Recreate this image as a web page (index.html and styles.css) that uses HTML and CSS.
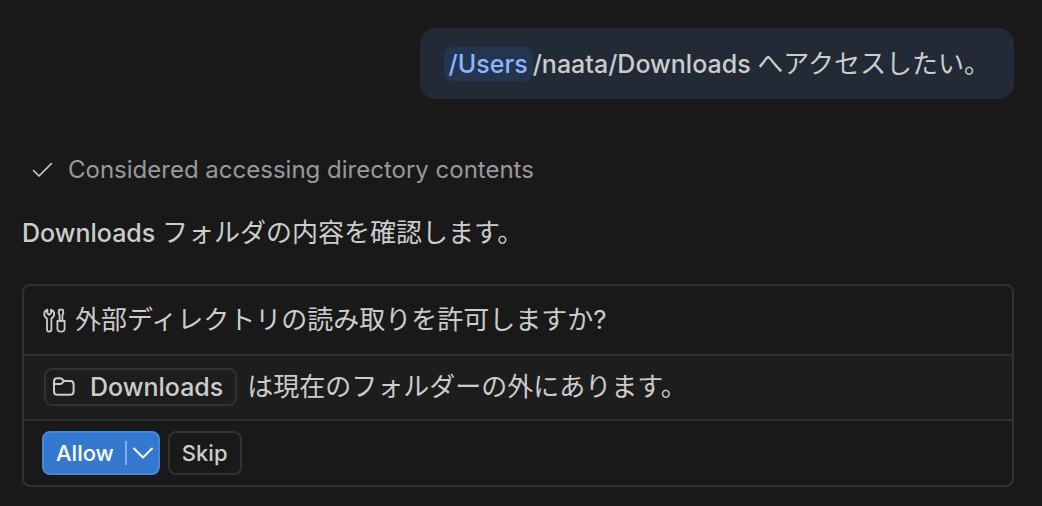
FILE: index.html
```html
<!DOCTYPE html>
<html lang="ja">
<head>
  <meta charset="UTF-8">
  <meta name="viewport" content="width=device-width, initial-scale=1.0">
  <title>Chat</title>
  <link rel="stylesheet" href="styles.css">
</head>
<body>

<main class="chat">
  <div class="request"><span class="command">/Users</span>/naata/Downloads <span class="ja">へアクセスしたい。</span></div>

  <div class="progress">
    <svg class="check-icon" width="22" height="22" viewBox="0 0 22 22" fill="none" stroke="currentColor" stroke-width="1.6" stroke-linecap="round" stroke-linejoin="round">
      <path d="M2.5 11.5L8 17L20.5 4.5"/>
    </svg>
    <span>Considered accessing directory contents</span>
  </div>

  <p class="response">Downloads <span class="ja">フォルダの内容を確認します。</span></p>

  <section class="confirm">
    <div class="confirm-title">
      <svg width="24" height="26" viewBox="0 0 24 26" fill="none" stroke="currentColor" stroke-width="1.8" stroke-linecap="round" stroke-linejoin="round">
        <path d="M4.4 2.6C2.4 3.4 1.2 5 1.2 7C1.2 9.1 2.4 10.7 4 11.6V22.2C4 23.7 5 24.6 6.2 24.6S8.4 23.7 8.4 22.2V11.6C10 10.7 11.2 9.1 11.2 7C11.2 5 10 3.4 8 2.6V6.4L6.2 7.8L4.4 6.4Z"/>
        <path d="M16.2 2.6H19.8L20.4 6L19.4 8V13.8H16.6V8L15.6 6Z"/>
        <path d="M14.4 13.8H21.6V21.4C21.6 23.4 20 24.6 18 24.6S14.4 23.4 14.4 21.4Z"/>
      </svg>
      <span class="ja">外部ディレクトリの読み取りを許可しますか?</span>
    </div>
    <div class="confirm-message">
      <a class="folder" href="#">
        <svg width="24" height="22" viewBox="0 0 24 22" fill="none" stroke="currentColor" stroke-width="2" stroke-linejoin="round">
          <path d="M2 7V5.5C2 3.5 3.3 2.2 5.3 2.2H8C8.8 2.2 9.4 2.5 10 3L12 5H18.2C20.3 5 21.6 6.3 21.6 8.4V15.4C21.6 17.5 20.3 18.8 18.2 18.8H5.4C3.3 18.8 2 17.5 2 15.4V7Z"/>
          <path d="M2 8H8C8.8 8 9.4 7.7 10 7.1L12 5"/>
        </svg>
        <span>Downloads</span>
      </a>
      <span class="ja">は現在のフォルダーの外にあります。</span>
    </div>
    <div class="confirm-buttons">
      <div class="split-button">
        <button type="button" class="allow">Allow</button>
        <button type="button" class="more" aria-label="More actions">
          <svg width="22" height="22" viewBox="0 0 22 22" fill="none" stroke="currentColor" stroke-width="2" stroke-linecap="round" stroke-linejoin="round">
            <path d="M2 6.5L11 15.5L20 6.5"/>
          </svg>
        </button>
      </div>
      <button type="button" class="skip">Skip</button>
    </div>
  </section>
</main>

</body>
</html>
```
FILE: styles.css
```css
:root {
  --bg-color: #191919;
  --row-color: #1d1d1d;
  --border-color: #313131;
  --text-color: #cccccc;
  --muted-color: #999999;
  --request-color: #212a35;
  --command-bg-color: #24364f;
  --command-color: #8db4ff;
  --button-color: #3478d0;
}
* {
  box-sizing: border-box;
}
body {
  margin: 0;
  background-color: var(--bg-color);
  color: var(--text-color);
  font-family: Inter, "Noto Sans CJK JP", sans-serif;
  font-size: 25px;
  font-weight: 500;
  line-height: 36px;
}
svg {
  display: block;
  flex: none;
}
.ja {
  font-size: 26px;
  font-weight: 400;
}
.chat {
  display: flex;
  flex-direction: column;
  padding: 28px 28px 18px 22px;
}
.request {
  align-self: flex-end;
  padding: 18px 24px 17px;
  border-radius: 16px;
  background-color: var(--request-color);
}
.command {
  padding: 2px 5px;
  border-radius: 8px;
  background-color: var(--command-bg-color);
  color: var(--command-color);
}
.progress {
  display: flex;
  align-items: center;
  gap: 15px;
  margin-top: 53px;
  padding-left: 9px;
  color: var(--muted-color);
  font-size: 24px;
  font-weight: 400;
}
.check-icon {
  color: var(--text-color);
}
.response {
  margin: 27px 0 33px;
}
.confirm {
  border: 2px solid var(--border-color);
  border-radius: 8px;
}
.confirm-title {
  display: flex;
  align-items: center;
  gap: 8px;
  padding: 16px 19px;
}
.confirm-message {
  display: flex;
  align-items: center;
  gap: 10px;
  padding: 12px 20px 13px;
  border-top: 2px solid var(--border-color);
  border-bottom: 2px solid var(--border-color);
  background-color: var(--row-color);
}
.folder {
  display: flex;
  align-items: center;
  gap: 14px;
  padding: 0 12px 0 6px;
  border: 2px solid var(--border-color);
  border-radius: 8px;
  color: inherit;
  line-height: 34px;
  text-decoration: none;
}
.confirm-buttons {
  display: flex;
  gap: 8px;
  padding: 10px 18px;
}
button {
  height: 44px;
  font-family: inherit;
  font-size: 22px;
  font-weight: 500;
  cursor: pointer;
}
.split-button {
  display: flex;
  align-items: center;
  height: 44px;
  border: 2px solid #4a86d6;
  border-radius: 8px;
  background-color: var(--button-color);
}
.split-button button {
  border: none;
  background: none;
  color: white;
}
.split-button .allow {
  padding: 0 11px 0 12px;
}
.split-button .more {
  display: flex;
  align-items: center;
  height: 24px;
  padding: 0 4px 0 5px;
  border-left: 2px solid #85afe3;
}
.skip {
  padding: 0 12px;
  border: 2px solid var(--border-color);
  border-radius: 8px;
  background-color: transparent;
  color: var(--text-color);
}
```
